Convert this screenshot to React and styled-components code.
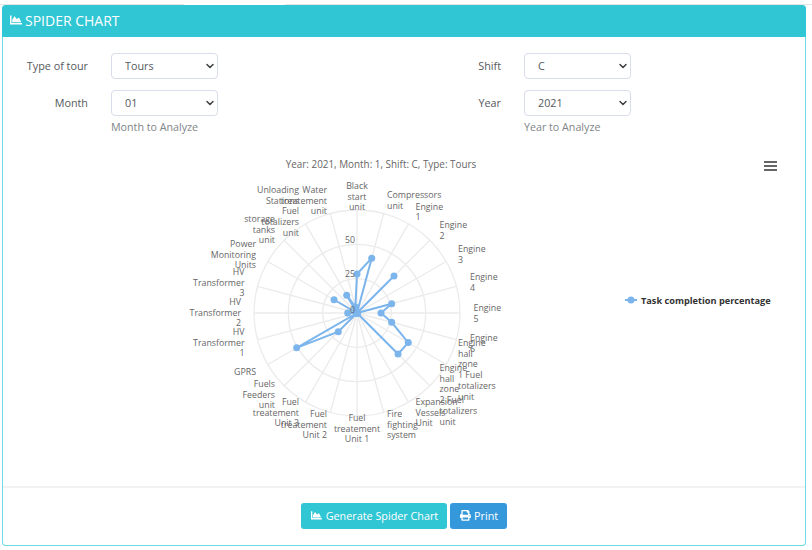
import React from "react";
import styled, { createGlobalStyle } from "styled-components";
import { FaChartArea, FaPrint } from "react-icons/fa";
import { ChevronDown } from "lucide-react";

const FONT = `"Open Sans", "Liberation Sans", sans-serif`;
const CX = 357;
const CY = 313;
const RING = 34.33;

//one entry per spoke, clockwise from the top
const CATEGORIES = [
  { r: 39, lines: ["Black", "start", "unit"], x: 357, y: 189, anchor: "middle" },
  { r: 56.8, lines: ["Compressors", "unit"], x: 387, y: 198, anchor: "start" },
  { r: 0, lines: ["Engine", "1"], x: 415.5, y: 209.5, anchor: "start" },
  { r: 52.3, lines: ["Engine", "2"], x: 439.5, y: 228, anchor: "start" },
  { r: 0, lines: ["Engine", "3"], x: 458, y: 252, anchor: "start" },
  { r: 35.9, lines: ["Engine", "4"], x: 470, y: 280, anchor: "start" },
  { r: 24, lines: ["Engine", "5"], x: 473.5, y: 311, anchor: "start" },
  { r: 35.9, lines: ["Engine", "6"], x: 470, y: 341, anchor: "start" },
  { r: 59.2, lines: ["Engine", "hall", "zone", "1 Fuel", "totalizers", "unit"], x: 458, y: 346, anchor: "start" },
  { r: 58, lines: ["Engine", "hall", "zone", "2 Fuel", "totalizers", "unit"], x: 439.5, y: 371, anchor: "start" },
  { r: 0, lines: ["Expansion", "Vessels", "Unit"], x: 415.5, y: 405, anchor: "start" },
  { r: 0, lines: ["Fire", "fighting", "system"], x: 387, y: 417, anchor: "start" },
  { r: 0, lines: ["Fuel", "treatement", "Unit 1"], x: 357, y: 421, anchor: "middle" },
  { r: 0, lines: ["Fuel", "treatement", "Unit 2"], x: 327, y: 417, anchor: "end" },
  { r: 0, lines: ["Fuel", "treatement", "Unit 3"], x: 299, y: 405, anchor: "end" },
  { r: 26.5, lines: ["Fuels", "Feeders", "unit"], x: 275, y: 387, anchor: "end" },
  { r: 69.7, lines: ["GPRS"], x: 256, y: 375, anchor: "end" },
  { r: 0, lines: ["HV", "Transformer", "1"], x: 244.5, y: 335, anchor: "end" },
  { r: 9.3, lines: ["HV", "Transformer", "2"], x: 241, y: 305, anchor: "end" },
  { r: 0, lines: ["HV", "Transformer", "3"], x: 244.5, y: 275, anchor: "end" },
  { r: 26.5, lines: ["Power", "Monitoring", "Units"], x: 256, y: 247, anchor: "end" },
  { r: 0, lines: ["storage", "tanks", "unit"], x: 275, y: 222, anchor: "end" },
  { r: 20.6, lines: ["Unloading", "Stations", "Fuel", "totalizers", "unit"], x: 299, y: 193, anchor: "end" },
  { r: 6.3, lines: ["Water", "treatement", "unit"], x: 327, y: 193, anchor: "end" },
];

const polar = (index, r) => {
  const angle = (index * 15 * Math.PI) / 180;
  return [CX + r * Math.sin(angle), CY - r * Math.cos(angle)];
};

const SCALE_LABELS = [
  { text: "0", y: 312.5 },
  { text: "25", y: 277 },
  { text: "50", y: 243 },
];

const GlobalStyle = createGlobalStyle`
  html, body {
    margin: 0;
    background: #fff;
    font-family: ${FONT};
  }
`;

const Page = styled.div`
  width: 812px;
  height: 550px;
  padding: 4px 6px 0 2px;
  box-sizing: border-box;
  overflow: hidden;
  position: relative;
`;

const TopStrip = styled.div`
  position: absolute;
  top: 4px;
  left: ${(p) => p.$left}px;
  width: ${(p) => p.$width}px;
  height: 1px;
  background: #e4e4e4;
`;

const Card = styled.section`
  position: relative;
  height: 541px;
  margin-top: 1px;
  box-sizing: border-box;
  border: 1px solid #6ddbe5;
  border-top: 0;
  border-radius: 4px;
  display: flex;
  flex-direction: column;
`;

const CardHeader = styled.header`
  height: 32px;
  margin: 0 -1px;
  padding: 0 8px 2px;
  box-sizing: border-box;
  background: #31c6d4;
  border-radius: 4px 4px 0 0;
  color: #fff;
  display: flex;
  align-items: center;
  gap: 3px;
  font-size: 14px;
  svg {
    font-size: 12px;
  }
`;

const Form = styled.div`
  display: grid;
  grid-template-columns: 413px 1fr;
  padding: 16px 0 0 0;
  row-gap: 11px;
`;

const Field = styled.div`
  display: grid;
  grid-template-columns: 85px 107px;
  column-gap: 23px;
  align-items: center;
  align-self: start;
`;

const FieldLabel = styled.label`
  padding-bottom: 2px;
  font-size: 10.8px;
  color: #55595c;
  text-align: right;
`;

const SelectBox = styled.div`
  position: relative;
  height: 26px;
  svg {
    position: absolute;
    top: 7px;
    right: 2px;
    color: #3d4043;
    pointer-events: none;
  }
`;

const Select = styled.select`
  appearance: none;
  display: block;
  height: 26px;
  width: 107px;
  padding: 0 9px 2px 13px;
  font-family: ${FONT};
  font-size: 10.8px;
  color: #55595c;
  background: #fff;
  border: 1px solid #d9dcea;
  border-radius: 4px;
`;

const Help = styled.small`
  grid-column: 2;
  margin-top: 4px;
  font-size: 10.7px;
  line-height: 14px;
  color: #7f8589;
`;

const ChartWrap = styled.div`
  height: 336px;
  margin-top: 16px;
  svg {
    display: block;
  }
  text {
    font-family: ${FONT};
    font-size: 8.8px;
    fill: #666;
  }
`;

const CardFooter = styled.footer`
  flex: 1;
  border-top: 2px solid #f2f2f2;
  padding-top: 15px;
  display: flex;
  justify-content: center;
  gap: 3px;
  align-items: flex-start;
`;

const Button = styled.button`
  height: 26px;
  padding: 0 9px 1px 10px;
  border: 0;
  border-radius: 3px;
  background: ${(p) => p.$bg};
  color: #fff;
  font-family: ${FONT};
  font-size: 10.8px;
  display: inline-flex;
  align-items: center;
  gap: ${(p) => p.$gap}px;
`;

const ChartTitle = styled.text`
  && {
    font-size: 9.9px;
  }
`;

const LegendText = styled.text`
  && {
    font-size: 9.2px;
    font-weight: 700;
    fill: #333;
  }
`;

function SpiderChart() {
  const points = CATEGORIES.map((c, i) => polar(i, c.r));
  const path = points.map((p) => p.join(",")).join(" ");
  return (
    <svg width="800" height="336" viewBox="3 150 800 336">
      {[1, 2, 3].map((n) => (
        <circle key={n} cx={CX} cy={CY} r={RING * n} fill="none" stroke="#ebebeb" strokeWidth="1.3" />
      ))}
      {CATEGORIES.map((c, i) => {
        const [x, y] = polar(i, RING * 3);
        return <line key={i} x1={CX} y1={CY} x2={x} y2={y} stroke="#ebebeb" strokeWidth="1.3" />;
      })}
      <polygon points={path} fill="none" stroke="#7cb5ec" strokeWidth="2" />
      {points.map(([x, y], i) => (
        <circle key={i} cx={x} cy={y} r="3.5" fill="#7cb5ec" />
      ))}
      {SCALE_LABELS.map((l) => (
        <text key={l.text} x="355" y={l.y} textAnchor="end">
          {l.text}
        </text>
      ))}
      {CATEGORIES.map((c, i) => (
        <text key={i} x={c.x} y={c.y} textAnchor={c.anchor}>
          {c.lines.map((line, j) => (
            <tspan key={j} x={c.x} dy={j === 0 ? 0 : 10.7}>
              {line}
            </tspan>
          ))}
        </text>
      ))}
      <ChartTitle x="381" y="168" textAnchor="middle">
        Year: 2021, Month: 1, Shift: C, Type: Tours
      </ChartTitle>
      <rect x="764" y="161" width="13" height="2" fill="#666" />
      <rect x="764" y="165" width="13" height="2" fill="#666" />
      <rect x="764" y="169" width="13" height="2" fill="#666" />
      <line x1="625" y1="300" x2="637" y2="300" stroke="#7cb5ec" strokeWidth="2" />
      <circle cx="631" cy="300" r="3.5" fill="#7cb5ec" />
      <LegendText x="641" y="303.5">
        Task completion percentage
      </LegendText>
    </svg>
  );
}

function Dropdown({ value }) {
  return (
    <SelectBox>
      <Select defaultValue={value}>
        <option>{value}</option>
      </Select>
      <ChevronDown size={12} strokeWidth={3} />
    </SelectBox>
  );
}

export default function App() {
  return (
    <Page>
      <GlobalStyle />
      <TopStrip $left={0} $width={184} />
      <TopStrip $left={285} $width={527} />
      <Card>
        <CardHeader>
          <FaChartArea />
          SPIDER CHART
        </CardHeader>
        <Form>
          <Field>
            <FieldLabel>Type of tour</FieldLabel>
            <Dropdown value="Tours" />
          </Field>
          <Field>
            <FieldLabel>Shift</FieldLabel>
            <Dropdown value="C" />
          </Field>
          <Field>
            <FieldLabel>Month</FieldLabel>
            <Dropdown value="01" />
            <Help>Month to Analyze</Help>
          </Field>
          <Field>
            <FieldLabel>Year</FieldLabel>
            <Dropdown value="2021" />
            <Help>Year to Analyze</Help>
          </Field>
        </Form>
        <ChartWrap>
          <SpiderChart />
        </ChartWrap>
        <CardFooter>
          <Button $bg="#31c6d4" $gap={4}>
            <FaChartArea />
            Generate Spider Chart
          </Button>
          <Button $bg="#3498db" $gap={3}>
            <FaPrint />
            Print
          </Button>
        </CardFooter>
      </Card>
    </Page>
  );
}
